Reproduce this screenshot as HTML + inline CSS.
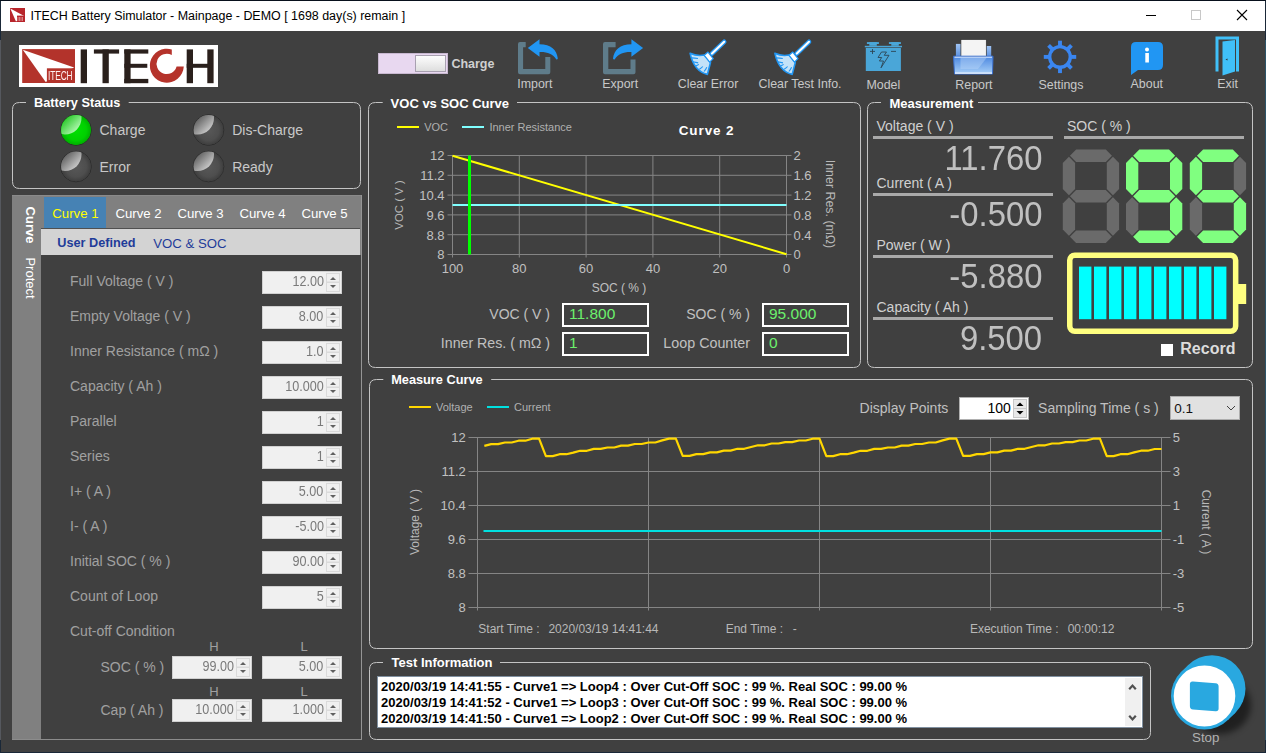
<!DOCTYPE html>
<html><head><meta charset="utf-8"><title>ITECH Battery Simulator</title>
<style>
html,body{margin:0;padding:0;width:1266px;height:753px;overflow:hidden;background:#1d2b3a;}
body{position:relative;font-family:"Liberation Sans", sans-serif;}
.t{position:absolute;white-space:nowrap;font-family:"Liberation Sans", sans-serif;}
svg{position:absolute;left:0;top:0;}
</style></head><body>
<div style="position:absolute;left:0px;top:0px;width:1266px;height:753px;background:#1a2838;"></div><div style="position:absolute;left:0px;top:0px;width:1266px;height:1px;background:#08101c;"></div><div style="position:absolute;left:0px;top:40px;width:1px;height:700px;background:#55585e;"></div><div style="position:absolute;left:1265px;top:40px;width:1px;height:700px;background:#2c5468;"></div><div style="position:absolute;left:1px;top:1px;width:1264px;height:751px;background:#404040;"></div><div style="position:absolute;left:1px;top:1px;width:1264px;height:30px;background:#ffffff;"></div><div style="position:absolute;left:19px;top:45px;width:199px;height:42px;background:#ffffff;"></div><div style="position:absolute;left:378px;top:53px;width:70px;height:21px;background:#e8d8f0;box-shadow: inset 0 0 0 1px #c8b8d0;"></div><div style="position:absolute;left:415px;top:55px;width:31px;height:17px;background:linear-gradient(#ffffff,#dcdcdc);box-shadow: inset 0 0 0 1px #a8a0b0;"></div><div style="position:absolute;left:12px;top:195px;width:349px;height:544px;background:#808080;"></div><div style="position:absolute;left:12px;top:195px;width:349px;height:1px;background:#8a8a8a;"></div><div style="position:absolute;left:44px;top:197px;width:62px;height:31px;background:#4682b4;"></div><div style="position:absolute;left:41px;top:228px;width:319px;height:27px;background:#d3d3d3;border-top:1px solid #505050;box-sizing:border-box;"></div><div style="position:absolute;left:41px;top:255px;width:320px;height:484px;background:#404040;"></div><div style="position:absolute;left:262px;top:271px;width:80px;height:23px;background:#f0f0f0;box-shadow: inset 0 0 0 1px #d0d0d0;"></div><div style="position:absolute;left:262px;top:306px;width:80px;height:23px;background:#f0f0f0;box-shadow: inset 0 0 0 1px #d0d0d0;"></div><div style="position:absolute;left:262px;top:341px;width:80px;height:23px;background:#f0f0f0;box-shadow: inset 0 0 0 1px #d0d0d0;"></div><div style="position:absolute;left:262px;top:376px;width:80px;height:23px;background:#f0f0f0;box-shadow: inset 0 0 0 1px #d0d0d0;"></div><div style="position:absolute;left:262px;top:411px;width:80px;height:23px;background:#f0f0f0;box-shadow: inset 0 0 0 1px #d0d0d0;"></div><div style="position:absolute;left:262px;top:446px;width:80px;height:23px;background:#f0f0f0;box-shadow: inset 0 0 0 1px #d0d0d0;"></div><div style="position:absolute;left:262px;top:481px;width:80px;height:23px;background:#f0f0f0;box-shadow: inset 0 0 0 1px #d0d0d0;"></div><div style="position:absolute;left:262px;top:516px;width:80px;height:23px;background:#f0f0f0;box-shadow: inset 0 0 0 1px #d0d0d0;"></div><div style="position:absolute;left:262px;top:551px;width:80px;height:23px;background:#f0f0f0;box-shadow: inset 0 0 0 1px #d0d0d0;"></div><div style="position:absolute;left:262px;top:586px;width:80px;height:23px;background:#f0f0f0;box-shadow: inset 0 0 0 1px #d0d0d0;"></div><div style="position:absolute;left:172px;top:656px;width:80px;height:23px;background:#f0f0f0;box-shadow: inset 0 0 0 1px #d0d0d0;"></div><div style="position:absolute;left:262px;top:656px;width:80px;height:23px;background:#f0f0f0;box-shadow: inset 0 0 0 1px #d0d0d0;"></div><div style="position:absolute;left:172px;top:699px;width:80px;height:23px;background:#f0f0f0;box-shadow: inset 0 0 0 1px #d0d0d0;"></div><div style="position:absolute;left:262px;top:699px;width:80px;height:23px;background:#f0f0f0;box-shadow: inset 0 0 0 1px #d0d0d0;"></div><div style="position:absolute;left:873px;top:136px;width:180px;height:3px;background:#a9a9a9;"></div><div style="position:absolute;left:873px;top:193px;width:180px;height:3px;background:#a9a9a9;"></div><div style="position:absolute;left:873px;top:255px;width:180px;height:3px;background:#a9a9a9;"></div><div style="position:absolute;left:873px;top:317px;width:180px;height:3px;background:#a9a9a9;"></div><div style="position:absolute;left:1064px;top:136px;width:180px;height:3px;background:#a9a9a9;"></div><div style="position:absolute;left:1161px;top:344px;width:11.5px;height:11.5px;background:#ffffff;"></div><div style="position:absolute;left:959px;top:397px;width:70px;height:23px;background:#ffffff;box-shadow: inset 0 0 0 1px #b0b0b0;"></div><div style="position:absolute;left:1170px;top:396px;width:70px;height:24px;background:#e1e1e1;box-shadow: inset 0 0 0 1px #adadad;"></div><div style="position:absolute;left:377px;top:676px;width:766px;height:52px;background:#ffffff;box-shadow: inset 0 0 0 1px #8090a0;"></div><div style="position:absolute;left:1125px;top:678px;width:16px;height:48px;background:#f0f0f0;"></div>
<svg width="1266" height="753" viewBox="0 0 1266 753"><defs>
<radialGradient id="ledg" cx="0.5" cy="0.5" r="0.5"><stop offset="0" stop-color="#00e000"/><stop offset="0.7" stop-color="#00d000"/><stop offset="1" stop-color="#00b000"/></radialGradient>
<radialGradient id="ledd" cx="0.5" cy="0.5" r="0.5"><stop offset="0" stop-color="#585858"/><stop offset="0.7" stop-color="#4e4e4e"/><stop offset="1" stop-color="#3e3e3e"/></radialGradient>
<linearGradient id="hlg" x1="0.2" y1="0.2" x2="0.85" y2="0.85"><stop offset="0" stop-color="#30c830"/><stop offset="1" stop-color="#b8f8b8"/></linearGradient>
<linearGradient id="hld" x1="0.2" y1="0.2" x2="0.85" y2="0.85"><stop offset="0" stop-color="#5a5a5a"/><stop offset="1" stop-color="#d0d0d0"/></linearGradient>
<linearGradient id="rep" x1="0" y1="0" x2="0" y2="1"><stop offset="0" stop-color="#4a86e0"/><stop offset="1" stop-color="#a8d0f8"/></linearGradient>
<linearGradient id="rep2" x1="0" y1="0" x2="0" y2="1"><stop offset="0" stop-color="#a0c4f4"/><stop offset="1" stop-color="#5a90e0"/></linearGradient>
<radialGradient id="shad" cx="0.5" cy="0.5" r="0.5"><stop offset="0.6" stop-color="#202020" stop-opacity="0.8"/><stop offset="1" stop-color="#202020" stop-opacity="0"/></radialGradient>
<filter id="blur" x="-50%" y="-50%" width="200%" height="200%"><feGaussianBlur stdDeviation="3"/></filter>
</defs><rect x="10" y="8" width="15" height="14" fill="#b8252b"/><path d="M10.3,8.5 L24.2,16 L16,21.6 Z" fill="#ffffff"/><rect x="17" y="15.6" width="7.6" height="6" fill="#b8252b"/><path d="M18,17 L18,21 M19.5,17 L19.5,21 M21,17 L21,21 M22.5,17 L22.5,21" stroke="#f0c0c0" stroke-width="0.6"/><line x1="1146" y1="15.5" x2="1156" y2="15.5" stroke="#000" stroke-width="1"/><rect x="1191.5" y="10.5" width="9" height="9" fill="none" stroke="#c8c8c8" stroke-width="1"/><path d="M1237,10 L1247,20 M1247,10 L1237,20" stroke="#000" stroke-width="1.1"/><rect x="22.2" y="49.1" width="52.8" height="33.9" fill="#b3332b"/><path d="M22.8,49.7 L74.1,67.4 L45.7,82.1 Z" fill="#ffffff"/><rect x="46.9" y="68.3" width="27.8" height="14.1" fill="#b3332b"/><rect x="80.7" y="49.4" width="6.3" height="33.8" fill="#2a201c"/><rect x="93.9" y="49.4" width="25.2" height="4.2" fill="#2a201c"/><rect x="102.5" y="49.4" width="6.3" height="33.8" fill="#2a201c"/><rect x="124.3" y="49.4" width="6.3" height="33.8" fill="#2a201c"/><rect x="124.3" y="49.4" width="24" height="4.2" fill="#2a201c"/><rect x="124.3" y="63.8" width="23" height="4" fill="#2a201c"/><rect x="124.3" y="78.9" width="24" height="4.3" fill="#2a201c"/><path d="M171.8,49.4 A17,17 0 1 0 183.8,66.6 L176.6,66.6 A10.2,10.2 0 1 1 171.8,55 Z" fill="#b5332b"/><rect x="186.7" y="49.4" width="6.3" height="33.8" fill="#2a201c"/><rect x="207.3" y="49.4" width="6.3" height="33.8" fill="#2a201c"/><rect x="186.7" y="63.8" width="26" height="4" fill="#2a201c"/><path d="M518,44 Q518,42 520,42 L525.7,42 L525.7,47.2 L523.1,47.2 L523.1,69.1 L545.3,69.1 L545.3,57.1 L550.3,57.1 L550.3,72.3 Q550.3,74.3 548.3,74.3 L520,74.3 Q518,74.3 518,72.3 Z" fill="#5f7c8a"/><path d="M557.8,58.5 C557,50 551,44.3 539.5,44.2 L539.5,39.3 L527.8,48 L539.5,56.8 L539.5,52.1 C547,51.8 553,54 556.2,59.3 Q557.3,60 557.8,58.5 Z" fill="#2196f3"/><path d="M603,44 Q603,42 605,42 L615.6,42 L615.6,47.2 L608.3,47.2 L608.3,69.1 L630.5,69.1 L630.5,59.4 L635.5,59.4 L635.5,72.3 Q635.5,74.3 633.5,74.3 L605,74.3 Q603,74.3 603,72.3 Z" fill="#5f7c8a"/><path d="M613,58.5 C614,50 620,44.3 631.4,44.2 L631.4,39.3 L643.1,48 L631.4,56.8 L631.4,52.1 C624,51.8 618,54 614.8,59.3 Q613.5,60 613,58.5 Z" fill="#2196f3"/><g transform="translate(684,34)"><path d="M40.2,7.8 L28,19.5" stroke="#2196f3" stroke-width="4.6" stroke-linecap="round"/><path d="M40.2,7.8 L28,19.5" stroke="#ffffff" stroke-width="2.2" stroke-linecap="round"/><path d="M6.1,19.3 Q13,22.5 20.5,21 L26.5,28.5 L23.4,40.4 Q10,37 6.1,19.3 Z" fill="#c4e2f8" stroke="#2196f3" stroke-width="1.6" stroke-linejoin="round"/><path d="M20.2,21.3 L24,18.1 L29.2,24.6 L25.7,28.1 Z" fill="#ffffff" stroke="#2196f3" stroke-width="1.3" stroke-linejoin="round"/><path d="M7.8,23.9 Q11,24 14,24.5 M9,27.8 Q12,28.5 14.2,28.9 M11.7,31.8 Q13.5,31.5 14.8,30.4 M15.4,35.2 Q17.5,34 18.8,32.5 M20,37.5 Q21.8,35.5 22.8,33.2" fill="none" stroke="#2196f3" stroke-width="1.1"/></g><g transform="translate(768.8,34)"><path d="M40.2,7.8 L28,19.5" stroke="#2196f3" stroke-width="4.6" stroke-linecap="round"/><path d="M40.2,7.8 L28,19.5" stroke="#ffffff" stroke-width="2.2" stroke-linecap="round"/><path d="M6.1,19.3 Q13,22.5 20.5,21 L26.5,28.5 L23.4,40.4 Q10,37 6.1,19.3 Z" fill="#c4e2f8" stroke="#2196f3" stroke-width="1.6" stroke-linejoin="round"/><path d="M20.2,21.3 L24,18.1 L29.2,24.6 L25.7,28.1 Z" fill="#ffffff" stroke="#2196f3" stroke-width="1.3" stroke-linejoin="round"/><path d="M7.8,23.9 Q11,24 14,24.5 M9,27.8 Q12,28.5 14.2,28.9 M11.7,31.8 Q13.5,31.5 14.8,30.4 M15.4,35.2 Q17.5,34 18.8,32.5 M20,37.5 Q21.8,35.5 22.8,33.2" fill="none" stroke="#2196f3" stroke-width="1.1"/></g><g transform="translate(860,36)"><rect x="5.8" y="11.9" width="35.1" height="23.1" fill="#4aa6d8"/><rect x="4.8" y="9.8" width="37.2" height="1.5" fill="#4aa6d8"/><rect x="6.9" y="6.1" width="12" height="1.9" fill="#4aa6d8"/><rect x="9.3" y="6.1" width="7.5" height="3.7" fill="#4aa6d8"/><rect x="28.9" y="6.1" width="12" height="1.9" fill="#4aa6d8"/><rect x="31.3" y="6.1" width="7.5" height="3.7" fill="#4aa6d8"/><path d="M10,15.4 L15,15.4 M12.5,13 L12.5,18 M31,15.4 L36,15.4" stroke="#2d4656" stroke-width="0.9"/><path d="M21.5,16 L26.5,16 L24.2,19.3 L29,19.3 L21,31.8 L23.5,25 L19.4,25 L21.7,21.5 L18,21.5 Z" fill="none" stroke="#2d4656" stroke-width="0.9" stroke-linejoin="round"/></g><g transform="translate(948,34)"><rect x="7.9" y="9.9" width="5.5" height="13" fill="url(#rep2)"/><rect x="37.8" y="12" width="5.4" height="11" fill="url(#rep2)"/><rect x="12.9" y="5.5" width="25.4" height="17" fill="#f4f4f4" stroke="#303030" stroke-width="0.7"/><path d="M5.5,22.2 L45,22.2 L44.5,40 L6.5,40 Z" fill="url(#rep)" stroke="#3a70d0" stroke-width="1"/><path d="M6.5,23.2 L44,23.2" stroke="#e0ecff" stroke-width="1"/><path d="M12.5,24 L38.5,24 L30,35 L12.5,35 Z" fill="#b8d4f8" opacity="0.45"/><path d="M7,39.2 L44,39.2" stroke="#f0f6ff" stroke-width="1.2"/></g><g transform="translate(1060,56.9)"><rect x="-1.95" y="-16.2" width="3.9" height="6" fill="#3a86f0" transform="rotate(0)"/><rect x="-1.95" y="-16.2" width="3.9" height="6" fill="#3a86f0" transform="rotate(45)"/><rect x="-1.95" y="-16.2" width="3.9" height="6" fill="#3a86f0" transform="rotate(90)"/><rect x="-1.95" y="-16.2" width="3.9" height="6" fill="#3a86f0" transform="rotate(135)"/><rect x="-1.95" y="-16.2" width="3.9" height="6" fill="#3a86f0" transform="rotate(180)"/><rect x="-1.95" y="-16.2" width="3.9" height="6" fill="#3a86f0" transform="rotate(225)"/><rect x="-1.95" y="-16.2" width="3.9" height="6" fill="#3a86f0" transform="rotate(270)"/><rect x="-1.95" y="-16.2" width="3.9" height="6" fill="#3a86f0" transform="rotate(315)"/><circle cx="0" cy="0" r="10.3" fill="none" stroke="#3a86f0" stroke-width="3.4"/></g><g transform="translate(1131,42)"><path d="M5,0 L27,0 Q32,0 32,5 L32,23 Q32,28 27,28 L7,28 L0,33 L0,5 Q0,0 5,0 Z" fill="#2196f3"/><circle cx="16" cy="7.5" r="2" fill="#fff"/><rect x="14.3" y="11" width="3.6" height="9.5" fill="#fff"/></g><g transform="translate(1215.5,36.5)"><path d="M0,0 L23.5,0 L23.5,35 L20.5,35 L20.5,3 L3,3 L3,35 L0,35 Z" fill="#40c0f8"/><path d="M7,5 L19.5,3.5 L19.5,35 L7,39 Z" fill="#40c0f8"/><path d="M10,23 L12,22 L12,24 Z" fill="#333"/></g><path d="M26,102.5 L19.5,102.5 Q12.5,102.5 12.5,109.5 L12.5,181.5 Q12.5,188.5 19.5,188.5 L353.5,188.5 Q360.5,188.5 360.5,181.5 L360.5,109.5 Q360.5,102.5 353.5,102.5 L128.7,102.5" fill="none" stroke="#c4c4c4" stroke-width="1"/><clipPath id="lc76_130"><circle cx="76" cy="130" r="14.9"/></clipPath><linearGradient id="hg76_130" gradientUnits="userSpaceOnUse" x1="65" y1="118" x2="76.5" y2="129.5"><stop offset="0" stop-color="#28c828"/><stop offset="1" stop-color="#a8f4a8"/></linearGradient><circle cx="76" cy="130" r="15.3" fill="#00c800" stroke="#2a2a2a" stroke-width="1"/><circle cx="76" cy="130" r="14.9" fill="url(#ledg)"/><circle cx="65" cy="118" r="16.5" fill="url(#hg76_130)" clip-path="url(#lc76_130)"/><clipPath id="lc76_166.5"><circle cx="76" cy="166.5" r="14.9"/></clipPath><linearGradient id="hg76_166.5" gradientUnits="userSpaceOnUse" x1="65" y1="154.5" x2="76.5" y2="166.0"><stop offset="0" stop-color="#606060"/><stop offset="1" stop-color="#c4c4c4"/></linearGradient><circle cx="76" cy="166.5" r="15.3" fill="#4c4c4c" stroke="#2a2a2a" stroke-width="1"/><circle cx="76" cy="166.5" r="14.9" fill="url(#ledd)"/><circle cx="65" cy="154.5" r="16.5" fill="url(#hg76_166.5)" clip-path="url(#lc76_166.5)"/><clipPath id="lc208.5_130"><circle cx="208.5" cy="130" r="14.9"/></clipPath><linearGradient id="hg208.5_130" gradientUnits="userSpaceOnUse" x1="197.5" y1="118" x2="209.0" y2="129.5"><stop offset="0" stop-color="#606060"/><stop offset="1" stop-color="#c4c4c4"/></linearGradient><circle cx="208.5" cy="130" r="15.3" fill="#4c4c4c" stroke="#2a2a2a" stroke-width="1"/><circle cx="208.5" cy="130" r="14.9" fill="url(#ledd)"/><circle cx="197.5" cy="118" r="16.5" fill="url(#hg208.5_130)" clip-path="url(#lc208.5_130)"/><clipPath id="lc208.5_166.5"><circle cx="208.5" cy="166.5" r="14.9"/></clipPath><linearGradient id="hg208.5_166.5" gradientUnits="userSpaceOnUse" x1="197.5" y1="154.5" x2="209.0" y2="166.0"><stop offset="0" stop-color="#606060"/><stop offset="1" stop-color="#c4c4c4"/></linearGradient><circle cx="208.5" cy="166.5" r="15.3" fill="#4c4c4c" stroke="#2a2a2a" stroke-width="1"/><circle cx="208.5" cy="166.5" r="14.9" fill="url(#ledd)"/><circle cx="197.5" cy="154.5" r="16.5" fill="url(#hg208.5_166.5)" clip-path="url(#lc208.5_166.5)"/><line x1="361.5" y1="195" x2="361.5" y2="740" stroke="#959595" stroke-width="1"/><line x1="12" y1="739.5" x2="362" y2="739.5" stroke="#8c8c8c" stroke-width="1"/><rect x="326.5" y="273.5" width="13" height="8.5" fill="#f0f0f0" stroke="#dadada" stroke-width="1"/><rect x="326.5" y="282.5" width="13" height="9" fill="#f0f0f0" stroke="#dadada" stroke-width="1"/><path d="M330,280 L333,277 L336,280 Z" fill="#606060"/><path d="M330,285 L333,288 L336,285 Z" fill="#606060"/><rect x="326.5" y="308.5" width="13" height="8.5" fill="#f0f0f0" stroke="#dadada" stroke-width="1"/><rect x="326.5" y="317.5" width="13" height="9" fill="#f0f0f0" stroke="#dadada" stroke-width="1"/><path d="M330,315 L333,312 L336,315 Z" fill="#606060"/><path d="M330,320 L333,323 L336,320 Z" fill="#606060"/><rect x="326.5" y="343.5" width="13" height="8.5" fill="#f0f0f0" stroke="#dadada" stroke-width="1"/><rect x="326.5" y="352.5" width="13" height="9" fill="#f0f0f0" stroke="#dadada" stroke-width="1"/><path d="M330,350 L333,347 L336,350 Z" fill="#606060"/><path d="M330,355 L333,358 L336,355 Z" fill="#606060"/><rect x="326.5" y="378.5" width="13" height="8.5" fill="#f0f0f0" stroke="#dadada" stroke-width="1"/><rect x="326.5" y="387.5" width="13" height="9" fill="#f0f0f0" stroke="#dadada" stroke-width="1"/><path d="M330,385 L333,382 L336,385 Z" fill="#606060"/><path d="M330,390 L333,393 L336,390 Z" fill="#606060"/><rect x="326.5" y="413.5" width="13" height="8.5" fill="#f0f0f0" stroke="#dadada" stroke-width="1"/><rect x="326.5" y="422.5" width="13" height="9" fill="#f0f0f0" stroke="#dadada" stroke-width="1"/><path d="M330,420 L333,417 L336,420 Z" fill="#606060"/><path d="M330,425 L333,428 L336,425 Z" fill="#606060"/><rect x="326.5" y="448.5" width="13" height="8.5" fill="#f0f0f0" stroke="#dadada" stroke-width="1"/><rect x="326.5" y="457.5" width="13" height="9" fill="#f0f0f0" stroke="#dadada" stroke-width="1"/><path d="M330,455 L333,452 L336,455 Z" fill="#606060"/><path d="M330,460 L333,463 L336,460 Z" fill="#606060"/><rect x="326.5" y="483.5" width="13" height="8.5" fill="#f0f0f0" stroke="#dadada" stroke-width="1"/><rect x="326.5" y="492.5" width="13" height="9" fill="#f0f0f0" stroke="#dadada" stroke-width="1"/><path d="M330,490 L333,487 L336,490 Z" fill="#606060"/><path d="M330,495 L333,498 L336,495 Z" fill="#606060"/><rect x="326.5" y="518.5" width="13" height="8.5" fill="#f0f0f0" stroke="#dadada" stroke-width="1"/><rect x="326.5" y="527.5" width="13" height="9" fill="#f0f0f0" stroke="#dadada" stroke-width="1"/><path d="M330,525 L333,522 L336,525 Z" fill="#606060"/><path d="M330,530 L333,533 L336,530 Z" fill="#606060"/><rect x="326.5" y="553.5" width="13" height="8.5" fill="#f0f0f0" stroke="#dadada" stroke-width="1"/><rect x="326.5" y="562.5" width="13" height="9" fill="#f0f0f0" stroke="#dadada" stroke-width="1"/><path d="M330,560 L333,557 L336,560 Z" fill="#606060"/><path d="M330,565 L333,568 L336,565 Z" fill="#606060"/><rect x="326.5" y="588.5" width="13" height="8.5" fill="#f0f0f0" stroke="#dadada" stroke-width="1"/><rect x="326.5" y="597.5" width="13" height="9" fill="#f0f0f0" stroke="#dadada" stroke-width="1"/><path d="M330,595 L333,592 L336,595 Z" fill="#606060"/><path d="M330,600 L333,603 L336,600 Z" fill="#606060"/><rect x="236.5" y="658.5" width="13" height="8.5" fill="#f0f0f0" stroke="#dadada" stroke-width="1"/><rect x="236.5" y="667.5" width="13" height="9" fill="#f0f0f0" stroke="#dadada" stroke-width="1"/><path d="M240,665 L243,662 L246,665 Z" fill="#606060"/><path d="M240,670 L243,673 L246,670 Z" fill="#606060"/><rect x="326.5" y="658.5" width="13" height="8.5" fill="#f0f0f0" stroke="#dadada" stroke-width="1"/><rect x="326.5" y="667.5" width="13" height="9" fill="#f0f0f0" stroke="#dadada" stroke-width="1"/><path d="M330,665 L333,662 L336,665 Z" fill="#606060"/><path d="M330,670 L333,673 L336,670 Z" fill="#606060"/><rect x="236.5" y="701.5" width="13" height="8.5" fill="#f0f0f0" stroke="#dadada" stroke-width="1"/><rect x="236.5" y="710.5" width="13" height="9" fill="#f0f0f0" stroke="#dadada" stroke-width="1"/><path d="M240,708 L243,705 L246,708 Z" fill="#606060"/><path d="M240,713 L243,716 L246,713 Z" fill="#606060"/><rect x="326.5" y="701.5" width="13" height="8.5" fill="#f0f0f0" stroke="#dadada" stroke-width="1"/><rect x="326.5" y="710.5" width="13" height="9" fill="#f0f0f0" stroke="#dadada" stroke-width="1"/><path d="M330,708 L333,705 L336,708 Z" fill="#606060"/><path d="M330,713 L333,716 L336,713 Z" fill="#606060"/><path d="M382.7,102.5 L375.5,102.5 Q368.5,102.5 368.5,109.5 L368.5,360.5 Q368.5,367.5 375.5,367.5 L853.5,367.5 Q860.5,367.5 860.5,360.5 L860.5,109.5 Q860.5,102.5 853.5,102.5 L517,102.5" fill="none" stroke="#c4c4c4" stroke-width="1"/><rect x="397" y="126" width="22" height="2" fill="#ffff00"/><rect x="462" y="126" width="22" height="2" fill="#80ffff"/><line x1="452.5" y1="155.5" x2="452.5" y2="257.5" stroke="#858585" stroke-width="1"/><line x1="447.5" y1="155.5" x2="791.5" y2="155.5" stroke="#858585" stroke-width="1"/><line x1="519.3" y1="155.5" x2="519.3" y2="257.5" stroke="#858585" stroke-width="1"/><line x1="447.5" y1="175.3" x2="791.5" y2="175.3" stroke="#858585" stroke-width="1"/><line x1="586.1" y1="155.5" x2="586.1" y2="257.5" stroke="#858585" stroke-width="1"/><line x1="447.5" y1="195.1" x2="791.5" y2="195.1" stroke="#858585" stroke-width="1"/><line x1="652.9" y1="155.5" x2="652.9" y2="257.5" stroke="#858585" stroke-width="1"/><line x1="447.5" y1="214.9" x2="791.5" y2="214.9" stroke="#858585" stroke-width="1"/><line x1="719.7" y1="155.5" x2="719.7" y2="257.5" stroke="#858585" stroke-width="1"/><line x1="447.5" y1="234.7" x2="791.5" y2="234.7" stroke="#858585" stroke-width="1"/><line x1="786.5" y1="155.5" x2="786.5" y2="257.5" stroke="#858585" stroke-width="1"/><line x1="447.5" y1="254.5" x2="791.5" y2="254.5" stroke="#858585" stroke-width="1"/><line x1="452.5" y1="155.7" x2="786.5" y2="254.2" stroke="#ffff00" stroke-width="2"/><line x1="452.5" y1="205" x2="786.5" y2="205" stroke="#80ffff" stroke-width="2.2"/><line x1="469.5" y1="155.5" x2="469.5" y2="254.5" stroke="#00ff00" stroke-width="3"/><rect x="563" y="304" width="85" height="22" fill="none" stroke="#ffffff" stroke-width="2"/><rect x="563" y="333" width="85" height="22" fill="none" stroke="#ffffff" stroke-width="2"/><rect x="763" y="304" width="85" height="22" fill="none" stroke="#ffffff" stroke-width="2"/><rect x="763" y="333" width="85" height="22" fill="none" stroke="#ffffff" stroke-width="2"/><path d="M881,102.5 L874.5,102.5 Q867.5,102.5 867.5,109.5 L867.5,360.5 Q867.5,367.5 874.5,367.5 L1245.5,367.5 Q1252.5,367.5 1252.5,360.5 L1252.5,109.5 Q1252.5,102.5 1245.5,102.5 L978,102.5" fill="none" stroke="#c4c4c4" stroke-width="1"/><polygon points="1069.95,155.75 1076.1000000000001,149.6 1105.7999999999997,149.6 1111.9499999999998,155.75 1105.7999999999997,161.9 1076.1000000000001,161.9" fill="#6a6a6a"/><polygon points="1112.9499999999998,156.75 1119.1,162.9 1119.1,189.1 1112.9499999999998,195.25 1106.7999999999997,189.1 1106.7999999999997,162.9" fill="#6a6a6a"/><polygon points="1112.9499999999998,197.25 1119.1,203.4 1119.1,229.59999999999997 1112.9499999999998,235.74999999999997 1106.7999999999997,229.59999999999997 1106.7999999999997,203.4" fill="#6a6a6a"/><polygon points="1069.95,236.74999999999997 1076.1000000000001,230.59999999999997 1105.7999999999997,230.59999999999997 1111.9499999999998,236.74999999999997 1105.7999999999997,242.89999999999998 1076.1000000000001,242.89999999999998" fill="#6a6a6a"/><polygon points="1068.95,197.25 1075.1000000000001,203.4 1075.1000000000001,229.59999999999997 1068.95,235.74999999999997 1062.8,229.59999999999997 1062.8,203.4" fill="#6a6a6a"/><polygon points="1068.95,156.75 1075.1000000000001,162.9 1075.1000000000001,189.1 1068.95,195.25 1062.8,189.1 1062.8,162.9" fill="#6a6a6a"/><polygon points="1069.95,196.25 1076.1000000000001,190.1 1105.7999999999997,190.1 1111.9499999999998,196.25 1105.7999999999997,202.4 1076.1000000000001,202.4" fill="#6a6a6a"/><polygon points="1133.15,155.75 1139.3000000000002,149.6 1168.9999999999998,149.6 1175.1499999999999,155.75 1168.9999999999998,161.9 1139.3000000000002,161.9" fill="#80ff80"/><polygon points="1176.1499999999999,156.75 1182.3,162.9 1182.3,189.1 1176.1499999999999,195.25 1169.9999999999998,189.1 1169.9999999999998,162.9" fill="#80ff80"/><polygon points="1176.1499999999999,197.25 1182.3,203.4 1182.3,229.59999999999997 1176.1499999999999,235.74999999999997 1169.9999999999998,229.59999999999997 1169.9999999999998,203.4" fill="#80ff80"/><polygon points="1133.15,236.74999999999997 1139.3000000000002,230.59999999999997 1168.9999999999998,230.59999999999997 1175.1499999999999,236.74999999999997 1168.9999999999998,242.89999999999998 1139.3000000000002,242.89999999999998" fill="#80ff80"/><polygon points="1132.15,197.25 1138.3000000000002,203.4 1138.3000000000002,229.59999999999997 1132.15,235.74999999999997 1126.0,229.59999999999997 1126.0,203.4" fill="#6a6a6a"/><polygon points="1132.15,156.75 1138.3000000000002,162.9 1138.3000000000002,189.1 1132.15,195.25 1126.0,189.1 1126.0,162.9" fill="#80ff80"/><polygon points="1133.15,196.25 1139.3000000000002,190.1 1168.9999999999998,190.1 1175.1499999999999,196.25 1168.9999999999998,202.4 1139.3000000000002,202.4" fill="#80ff80"/><polygon points="1196.95,155.75 1203.1000000000001,149.6 1232.7999999999997,149.6 1238.9499999999998,155.75 1232.7999999999997,161.9 1203.1000000000001,161.9" fill="#80ff80"/><polygon points="1239.9499999999998,156.75 1246.1,162.9 1246.1,189.1 1239.9499999999998,195.25 1233.7999999999997,189.1 1233.7999999999997,162.9" fill="#6a6a6a"/><polygon points="1239.9499999999998,197.25 1246.1,203.4 1246.1,229.59999999999997 1239.9499999999998,235.74999999999997 1233.7999999999997,229.59999999999997 1233.7999999999997,203.4" fill="#80ff80"/><polygon points="1196.95,236.74999999999997 1203.1000000000001,230.59999999999997 1232.7999999999997,230.59999999999997 1238.9499999999998,236.74999999999997 1232.7999999999997,242.89999999999998 1203.1000000000001,242.89999999999998" fill="#80ff80"/><polygon points="1195.95,197.25 1202.1000000000001,203.4 1202.1000000000001,229.59999999999997 1195.95,235.74999999999997 1189.8,229.59999999999997 1189.8,203.4" fill="#6a6a6a"/><polygon points="1195.95,156.75 1202.1000000000001,162.9 1202.1000000000001,189.1 1195.95,195.25 1189.8,189.1 1189.8,162.9" fill="#80ff80"/><polygon points="1196.95,196.25 1203.1000000000001,190.1 1232.7999999999997,190.1 1238.9499999999998,196.25 1232.7999999999997,202.4 1203.1000000000001,202.4" fill="#80ff80"/><rect x="1069.75" y="255.25" width="165.9" height="76.1" rx="5" fill="none" stroke="#ffff80" stroke-width="5.5"/><rect x="1238" y="284" width="8.2" height="20" fill="#ffff80"/><rect x="1079" y="266.6" width="12.4" height="52.6" fill="#00ffff"/><rect x="1094" y="266.6" width="12.4" height="52.6" fill="#00ffff"/><rect x="1109" y="266.6" width="12.4" height="52.6" fill="#00ffff"/><rect x="1124" y="266.6" width="12.4" height="52.6" fill="#00ffff"/><rect x="1139" y="266.6" width="12.4" height="52.6" fill="#00ffff"/><rect x="1154" y="266.6" width="12.4" height="52.6" fill="#00ffff"/><rect x="1169" y="266.6" width="12.4" height="52.6" fill="#00ffff"/><rect x="1184" y="266.6" width="12.4" height="52.6" fill="#00ffff"/><rect x="1199" y="266.6" width="12.4" height="52.6" fill="#00ffff"/><rect x="1214" y="266.6" width="12.4" height="52.6" fill="#00ffff"/><path d="M383.3,379.5 L376.5,379.5 Q369.5,379.5 369.5,386.5 L369.5,641.5 Q369.5,648.5 376.5,648.5 L1245.5,648.5 Q1252.5,648.5 1252.5,641.5 L1252.5,386.5 Q1252.5,379.5 1245.5,379.5 L491.2,379.5" fill="none" stroke="#c4c4c4" stroke-width="1"/><rect x="409" y="406" width="22" height="2" fill="#ffd700"/><rect x="487" y="406" width="22" height="2" fill="#00e0e0"/><rect x="1013.5" y="399.5" width="13" height="9" fill="#e8e8e8" stroke="#c8c8c8" stroke-width="1"/><rect x="1013.5" y="408.5" width="13" height="9" fill="#e8e8e8" stroke="#c8c8c8" stroke-width="1"/><path d="M1016.5,406 L1020,402.5 L1023.5,406 Z" fill="#000"/><path d="M1016.5,411 L1020,414.5 L1023.5,411 Z" fill="#000"/><path d="M1227,406 L1231,410 L1235,406" fill="none" stroke="#404040" stroke-width="1"/><line x1="477.5" y1="437.5" x2="477.5" y2="610.5" stroke="#858585" stroke-width="1"/><line x1="648.5" y1="437.5" x2="648.5" y2="610.5" stroke="#858585" stroke-width="1"/><line x1="819.5" y1="437.5" x2="819.5" y2="610.5" stroke="#858585" stroke-width="1"/><line x1="990.5" y1="437.5" x2="990.5" y2="610.5" stroke="#858585" stroke-width="1"/><line x1="1161.5" y1="437.5" x2="1161.5" y2="610.5" stroke="#858585" stroke-width="1"/><line x1="468.5" y1="437.5" x2="1170.5" y2="437.5" stroke="#858585" stroke-width="1"/><line x1="468.5" y1="471.5" x2="1170.5" y2="471.5" stroke="#858585" stroke-width="1"/><line x1="468.5" y1="505.5" x2="1170.5" y2="505.5" stroke="#858585" stroke-width="1"/><line x1="468.5" y1="539.5" x2="1170.5" y2="539.5" stroke="#858585" stroke-width="1"/><line x1="468.5" y1="573.5" x2="1170.5" y2="573.5" stroke="#858585" stroke-width="1"/><line x1="468.5" y1="607.5" x2="1170.5" y2="607.5" stroke="#858585" stroke-width="1"/><polyline points="484.34,445.90 491.18,444.10 498.02,444.10 504.86,442.50 511.70,442.50 518.54,440.70 525.38,440.70 532.22,438.70 539.06,438.70 545.90,456.10 552.74,456.10 559.58,454.20 566.42,454.20 573.26,452.60 580.10,450.80 586.94,450.80 593.78,448.90 600.62,448.90 607.46,447.50 614.30,447.50 621.14,445.60 627.98,445.60 634.82,444.00 641.66,444.00 648.50,442.50 655.34,442.50 662.18,440.40 669.02,438.60 675.86,438.60 682.70,455.90 689.54,455.90 696.38,454.10 703.22,454.10 710.06,452.40 716.90,452.40 723.74,450.60 730.58,450.60 737.42,448.80 744.26,448.80 751.10,447.00 757.94,445.30 764.78,445.30 771.62,443.50 778.46,443.50 785.30,442.10 792.14,442.10 798.98,440.50 805.82,440.50 812.66,438.70 819.50,438.70 826.34,456.10 833.18,456.10 840.02,454.20 846.86,454.20 853.70,452.60 860.54,450.80 867.38,450.80 874.22,448.90 881.06,448.90 887.90,447.50 894.74,447.50 901.58,445.60 908.42,445.60 915.26,444.00 922.10,444.00 928.94,442.50 935.78,442.50 942.62,440.40 949.46,438.60 956.30,438.60 963.14,455.90 969.98,455.90 976.82,454.10 983.66,454.10 990.50,452.40 997.34,452.40 1004.18,450.60 1011.02,450.60 1017.86,448.80 1024.70,448.80 1031.54,447.00 1038.38,445.30 1045.22,445.30 1052.06,443.50 1058.90,443.50 1065.74,442.10 1072.58,442.10 1079.42,440.50 1086.26,440.50 1093.10,438.70 1099.94,438.70 1106.78,456.10 1113.62,456.10 1120.46,454.20 1127.30,454.20 1134.14,452.40 1140.98,450.70 1147.82,450.70 1154.66,449.00 1161.50,449.00" fill="none" stroke="#ffd700" stroke-width="2.2" stroke-linejoin="round"/><line x1="483.5" y1="531" x2="1161.5" y2="531" stroke="#00e0e0" stroke-width="2.2"/><path d="M383,662.5 L376.5,662.5 Q369.5,662.5 369.5,669.5 L369.5,732.5 Q369.5,739.5 376.5,739.5 L1143.5,739.5 Q1150.5,739.5 1150.5,732.5 L1150.5,669.5 Q1150.5,662.5 1143.5,662.5 L500,662.5" fill="none" stroke="#c4c4c4" stroke-width="1"/><path d="M1129.2,689.2 L1132.5,685.6 L1135.8,689.2" fill="none" stroke="#505050" stroke-width="2.2"/><path d="M1129.2,715.8 L1132.5,719.4 L1135.8,715.8" fill="none" stroke="#505050" stroke-width="2.2"/><ellipse cx="1220" cy="705" rx="31" ry="29" fill="#000" opacity="0.5" filter="url(#blur)"/><circle cx="1204.5" cy="696" r="33.5" fill="#29a8e0"/><circle cx="1212" cy="688.7" r="33.5" fill="#29a8e0"/><path d="M1181.1,672 L1188.6,664.7 L1235.4,712.7 L1227.9,720 Z" fill="#29a8e0"/><ellipse cx="1204.5" cy="696" rx="30.8" ry="30.5" fill="#ffffff"/><rect x="0" y="0" width="28.7" height="28" rx="3" fill="#29a8e0" transform="translate(1189.9,681.3) skewY(4.5)"/></svg>
<div class="t" style="left:30.5px;top:9.78px;font-size:12.45px;line-height:12.45px;color:#000000;font-weight:400;">ITECH Battery Simulator - Mainpage - DEMO [ 1698 day(s) remain ]</div><div class="t" style="left:48.3px;top:69.2px;font-size:13.5px;line-height:13px;color:#fff0f0;font-weight:400;transform:scaleX(0.62);transform-origin:0 0;letter-spacing:-0.2px">ITECH</div><div class="t" style="left:451.4px;top:57.95px;font-size:12.5px;line-height:12.5px;color:#d0d0d0;font-weight:700;">Charge</div><div class="t" style="left:534.8px;transform:translateX(-50%);top:78.00px;font-size:12.4px;line-height:12.4px;color:#c8c8c8;font-weight:400;">Import</div><div class="t" style="left:620.2px;transform:translateX(-50%);top:78.00px;font-size:12.4px;line-height:12.4px;color:#c8c8c8;font-weight:400;">Export</div><div class="t" style="left:708px;transform:translateX(-50%);top:78.00px;font-size:12.4px;line-height:12.4px;color:#c8c8c8;font-weight:400;">Clear Error</div><div class="t" style="left:800px;transform:translateX(-50%);top:78.00px;font-size:12.4px;line-height:12.4px;color:#c8c8c8;font-weight:400;">Clear Test Info.</div><div class="t" style="left:883.4px;transform:translateX(-50%);top:78.50px;font-size:12.4px;line-height:12.4px;color:#c8c8c8;font-weight:400;">Model</div><div class="t" style="left:973.9px;transform:translateX(-50%);top:79.20px;font-size:12.4px;line-height:12.4px;color:#c8c8c8;font-weight:400;">Report</div><div class="t" style="left:1061px;transform:translateX(-50%);top:78.50px;font-size:12.4px;line-height:12.4px;color:#c8c8c8;font-weight:400;">Settings</div><div class="t" style="left:1146.8px;transform:translateX(-50%);top:78.20px;font-size:12.4px;line-height:12.4px;color:#c8c8c8;font-weight:400;">About</div><div class="t" style="left:1227.7px;transform:translateX(-50%);top:78.20px;font-size:12.4px;line-height:12.4px;color:#c8c8c8;font-weight:400;">Exit</div><div class="t" style="left:34px;top:97.42px;font-size:12.75px;line-height:12.75px;color:#ffffff;font-weight:700;">Battery Status</div><div class="t" style="left:99.5px;top:123.00px;font-size:14px;line-height:14.0px;color:#c8c8c8;font-weight:400;">Charge</div><div class="t" style="left:99.5px;top:159.50px;font-size:14px;line-height:14.0px;color:#c8c8c8;font-weight:400;">Error</div><div class="t" style="left:232.2px;top:123.00px;font-size:14px;line-height:14.0px;color:#c8c8c8;font-weight:400;">Dis-Charge</div><div class="t" style="left:232.2px;top:159.50px;font-size:14px;line-height:14.0px;color:#c8c8c8;font-weight:400;">Ready</div><div class="t" style="left:52.3px;top:206.80px;font-size:13.2px;line-height:13.2px;color:#ffff00;font-weight:400;">Curve 1</div><div class="t" style="left:115.4px;top:206.80px;font-size:13.2px;line-height:13.2px;color:#ffffff;font-weight:400;">Curve 2</div><div class="t" style="left:177.4px;top:206.80px;font-size:13.2px;line-height:13.2px;color:#ffffff;font-weight:400;">Curve 3</div><div class="t" style="left:239.4px;top:206.80px;font-size:13.2px;line-height:13.2px;color:#ffffff;font-weight:400;">Curve 4</div><div class="t" style="left:301.5px;top:206.80px;font-size:13.2px;line-height:13.2px;color:#ffffff;font-weight:400;">Curve 5</div><div class="t" style="left:57.3px;top:237.45px;font-size:12.7px;line-height:12.7px;color:#1f3c99;font-weight:700;">User Defined</div><div class="t" style="left:153.3px;top:236.70px;font-size:13.2px;line-height:13.2px;color:#1f3c99;font-weight:400;">VOC &amp; SOC</div><div class="t" style="left:30px;top:225px;font-size:13px;line-height:13px;color:#fff;font-weight:700;transform:translate(-50%,-50%) rotate(90deg);">Curve</div><div class="t" style="left:30px;top:278.3px;font-size:13px;line-height:13px;color:#fff;font-weight:400;transform:translate(-50%,-50%) rotate(90deg);">Protect</div><div class="t" style="left:70px;top:273.50px;font-size:14px;line-height:14.0px;color:#a0a0a0;font-weight:400;">Full Voltage ( V )</div><div class="t" style="right:942.4px;top:274.00px;font-size:14px;line-height:14.0px;color:#7a7a7a;font-weight:400;transform:scaleX(0.9);transform-origin:100% 50%;">12.00</div><div class="t" style="left:70px;top:308.50px;font-size:14px;line-height:14.0px;color:#a0a0a0;font-weight:400;">Empty Voltage ( V )</div><div class="t" style="right:942.4px;top:309.00px;font-size:14px;line-height:14.0px;color:#7a7a7a;font-weight:400;transform:scaleX(0.9);transform-origin:100% 50%;">8.00</div><div class="t" style="left:70px;top:343.50px;font-size:14px;line-height:14.0px;color:#a0a0a0;font-weight:400;">Inner Resistance ( mΩ )</div><div class="t" style="right:942.4px;top:344.00px;font-size:14px;line-height:14.0px;color:#7a7a7a;font-weight:400;transform:scaleX(0.9);transform-origin:100% 50%;">1.0</div><div class="t" style="left:70px;top:378.50px;font-size:14px;line-height:14.0px;color:#a0a0a0;font-weight:400;">Capacity ( Ah )</div><div class="t" style="right:942.4px;top:379.00px;font-size:14px;line-height:14.0px;color:#7a7a7a;font-weight:400;transform:scaleX(0.9);transform-origin:100% 50%;">10.000</div><div class="t" style="left:70px;top:413.50px;font-size:14px;line-height:14.0px;color:#a0a0a0;font-weight:400;">Parallel</div><div class="t" style="right:942.4px;top:414.00px;font-size:14px;line-height:14.0px;color:#7a7a7a;font-weight:400;transform:scaleX(0.9);transform-origin:100% 50%;">1</div><div class="t" style="left:70px;top:448.50px;font-size:14px;line-height:14.0px;color:#a0a0a0;font-weight:400;">Series</div><div class="t" style="right:942.4px;top:449.00px;font-size:14px;line-height:14.0px;color:#7a7a7a;font-weight:400;transform:scaleX(0.9);transform-origin:100% 50%;">1</div><div class="t" style="left:70px;top:483.50px;font-size:14px;line-height:14.0px;color:#a0a0a0;font-weight:400;">I+ ( A )</div><div class="t" style="right:942.4px;top:484.00px;font-size:14px;line-height:14.0px;color:#7a7a7a;font-weight:400;transform:scaleX(0.9);transform-origin:100% 50%;">5.00</div><div class="t" style="left:70px;top:518.50px;font-size:14px;line-height:14.0px;color:#a0a0a0;font-weight:400;">I- ( A )</div><div class="t" style="right:942.4px;top:519.00px;font-size:14px;line-height:14.0px;color:#7a7a7a;font-weight:400;transform:scaleX(0.9);transform-origin:100% 50%;">-5.00</div><div class="t" style="left:70px;top:553.50px;font-size:14px;line-height:14.0px;color:#a0a0a0;font-weight:400;">Initial SOC ( % )</div><div class="t" style="right:942.4px;top:554.00px;font-size:14px;line-height:14.0px;color:#7a7a7a;font-weight:400;transform:scaleX(0.9);transform-origin:100% 50%;">90.00</div><div class="t" style="left:70px;top:588.50px;font-size:14px;line-height:14.0px;color:#a0a0a0;font-weight:400;">Count of Loop</div><div class="t" style="right:942.4px;top:589.00px;font-size:14px;line-height:14.0px;color:#7a7a7a;font-weight:400;transform:scaleX(0.9);transform-origin:100% 50%;">5</div><div class="t" style="left:70px;top:623.50px;font-size:14px;line-height:14.0px;color:#a0a0a0;font-weight:400;">Cut-off Condition</div><div class="t" style="left:214px;transform:translateX(-50%);top:640.20px;font-size:13px;line-height:13.0px;color:#a0a0a0;font-weight:400;">H</div><div class="t" style="left:304px;transform:translateX(-50%);top:640.20px;font-size:13px;line-height:13.0px;color:#a0a0a0;font-weight:400;">L</div><div class="t" style="left:100.5px;top:659.50px;font-size:14px;line-height:14.0px;color:#a0a0a0;font-weight:400;">SOC ( % )</div><div class="t" style="right:1032.4px;top:659.00px;font-size:14px;line-height:14.0px;color:#7a7a7a;font-weight:400;transform:scaleX(0.9);transform-origin:100% 50%;">99.00</div><div class="t" style="right:942.4px;top:659.00px;font-size:14px;line-height:14.0px;color:#7a7a7a;font-weight:400;transform:scaleX(0.9);transform-origin:100% 50%;">5.00</div><div class="t" style="left:214px;transform:translateX(-50%);top:685.30px;font-size:13px;line-height:13.0px;color:#a0a0a0;font-weight:400;">H</div><div class="t" style="left:304px;transform:translateX(-50%);top:685.30px;font-size:13px;line-height:13.0px;color:#a0a0a0;font-weight:400;">L</div><div class="t" style="left:100.5px;top:703.30px;font-size:14px;line-height:14.0px;color:#a0a0a0;font-weight:400;">Cap ( Ah )</div><div class="t" style="right:1032.4px;top:702.00px;font-size:14px;line-height:14.0px;color:#7a7a7a;font-weight:400;transform:scaleX(0.9);transform-origin:100% 50%;">10.000</div><div class="t" style="right:942.4px;top:702.00px;font-size:14px;line-height:14.0px;color:#7a7a7a;font-weight:400;transform:scaleX(0.9);transform-origin:100% 50%;">1.000</div><div class="t" style="left:390.6px;top:96.80px;font-size:13px;line-height:13.0px;color:#ffffff;font-weight:700;">VOC vs SOC Curve</div><div class="t" style="left:424.2px;top:122.00px;font-size:11px;line-height:11.0px;color:#b0b0b0;font-weight:400;">VOC</div><div class="t" style="left:489.4px;top:122.00px;font-size:11px;line-height:11.0px;color:#b0b0b0;font-weight:400;">Inner Resistance</div><div class="t" style="left:706.6px;transform:translateX(-50%);top:123.65px;font-size:13.5px;line-height:13.5px;color:#ffffff;font-weight:700;letter-spacing:0.9px;">Curve 2</div><div class="t" style="right:821.5px;top:149.30px;font-size:13px;line-height:13.0px;color:#c0c0c0;font-weight:400;">12</div><div class="t" style="right:821.5px;top:169.10px;font-size:13px;line-height:13.0px;color:#c0c0c0;font-weight:400;">11.2</div><div class="t" style="right:821.5px;top:188.90px;font-size:13px;line-height:13.0px;color:#c0c0c0;font-weight:400;">10.4</div><div class="t" style="right:821.5px;top:208.70px;font-size:13px;line-height:13.0px;color:#c0c0c0;font-weight:400;">9.6</div><div class="t" style="right:821.5px;top:228.50px;font-size:13px;line-height:13.0px;color:#c0c0c0;font-weight:400;">8.8</div><div class="t" style="right:821.5px;top:248.30px;font-size:13px;line-height:13.0px;color:#c0c0c0;font-weight:400;">8</div><div class="t" style="left:793.5px;top:149.30px;font-size:13px;line-height:13.0px;color:#c0c0c0;font-weight:400;">2</div><div class="t" style="left:793.5px;top:169.10px;font-size:13px;line-height:13.0px;color:#c0c0c0;font-weight:400;">1.6</div><div class="t" style="left:793.5px;top:188.90px;font-size:13px;line-height:13.0px;color:#c0c0c0;font-weight:400;">1.2</div><div class="t" style="left:793.5px;top:208.70px;font-size:13px;line-height:13.0px;color:#c0c0c0;font-weight:400;">0.8</div><div class="t" style="left:793.5px;top:228.50px;font-size:13px;line-height:13.0px;color:#c0c0c0;font-weight:400;">0.4</div><div class="t" style="left:793.5px;top:248.30px;font-size:13px;line-height:13.0px;color:#c0c0c0;font-weight:400;">0</div><div class="t" style="left:452.5px;transform:translateX(-50%);top:262.30px;font-size:13px;line-height:13.0px;color:#c0c0c0;font-weight:400;">100</div><div class="t" style="left:519.3px;transform:translateX(-50%);top:262.30px;font-size:13px;line-height:13.0px;color:#c0c0c0;font-weight:400;">80</div><div class="t" style="left:586.1px;transform:translateX(-50%);top:262.30px;font-size:13px;line-height:13.0px;color:#c0c0c0;font-weight:400;">60</div><div class="t" style="left:652.9px;transform:translateX(-50%);top:262.30px;font-size:13px;line-height:13.0px;color:#c0c0c0;font-weight:400;">40</div><div class="t" style="left:719.7px;transform:translateX(-50%);top:262.30px;font-size:13px;line-height:13.0px;color:#c0c0c0;font-weight:400;">20</div><div class="t" style="left:786.5px;transform:translateX(-50%);top:262.30px;font-size:13px;line-height:13.0px;color:#c0c0c0;font-weight:400;">0</div><div class="t" style="left:619px;transform:translateX(-50%);top:281.80px;font-size:12px;line-height:12.0px;color:#c0c0c0;font-weight:400;">SOC ( % )</div><div class="t" style="left:398.8px;top:204.5px;font-size:11.4px;line-height:12px;color:#b8b8b8;transform:translate(-50%,-50%) rotate(-90deg);">VOC ( V )</div><div class="t" style="left:830px;top:204px;font-size:12.4px;line-height:12px;color:#b8b8b8;transform:translate(-50%,-50%) rotate(90deg);">Inner Res. (mΩ)</div><div class="t" style="left:569px;top:305.95px;font-size:15.5px;line-height:15.5px;color:#6cf06c;font-weight:400;">11.800</div><div class="t" style="left:569px;top:334.95px;font-size:15.5px;line-height:15.5px;color:#6cf06c;font-weight:400;">1</div><div class="t" style="left:769px;top:305.95px;font-size:15.5px;line-height:15.5px;color:#6cf06c;font-weight:400;">95.000</div><div class="t" style="left:769px;top:334.95px;font-size:15.5px;line-height:15.5px;color:#6cf06c;font-weight:400;">0</div><div class="t" style="right:716px;top:307.20px;font-size:14px;line-height:14.0px;color:#c0c0c0;font-weight:400;">VOC ( V )</div><div class="t" style="right:716px;top:336.10px;font-size:14.2px;line-height:14.2px;color:#c0c0c0;font-weight:400;">Inner Res. ( mΩ )</div><div class="t" style="right:516px;top:307.20px;font-size:14px;line-height:14.0px;color:#c0c0c0;font-weight:400;">SOC ( % )</div><div class="t" style="right:516px;top:336.05px;font-size:14.3px;line-height:14.3px;color:#c0c0c0;font-weight:400;">Loop Counter</div><div class="t" style="left:889.5px;top:96.80px;font-size:13px;line-height:13.0px;color:#ffffff;font-weight:700;">Measurement</div><div class="t" style="left:876.5px;top:119.00px;font-size:14px;line-height:14.0px;color:#d0d0d0;font-weight:400;">Voltage ( V )</div><div class="t" style="right:223.70000000000005px;top:140.70px;font-size:34px;line-height:34.0px;color:#c0c0c0;font-weight:400;transform:scale(0.965,1.04);transform-origin:100% 29px;">11.760</div><div class="t" style="left:876.5px;top:175.70px;font-size:14px;line-height:14.0px;color:#d0d0d0;font-weight:400;">Current ( A )</div><div class="t" style="right:223.70000000000005px;top:196.80px;font-size:34px;line-height:34.0px;color:#c0c0c0;font-weight:400;transform:scale(0.965,1.04);transform-origin:100% 29px;">-0.500</div><div class="t" style="left:876.5px;top:237.70px;font-size:14px;line-height:14.0px;color:#d0d0d0;font-weight:400;">Power ( W )</div><div class="t" style="right:223.70000000000005px;top:259.10px;font-size:34px;line-height:34.0px;color:#c0c0c0;font-weight:400;transform:scale(0.965,1.04);transform-origin:100% 29px;">-5.880</div><div class="t" style="left:876.5px;top:300.00px;font-size:14px;line-height:14.0px;color:#d0d0d0;font-weight:400;">Capacity ( Ah )</div><div class="t" style="right:223.70000000000005px;top:321.00px;font-size:34px;line-height:34.0px;color:#c0c0c0;font-weight:400;transform:scale(0.965,1.04);transform-origin:100% 29px;">9.500</div><div class="t" style="left:1067px;top:118.80px;font-size:14px;line-height:14.0px;color:#d0d0d0;font-weight:400;">SOC ( % )</div><div class="t" style="left:1180.3px;top:341.00px;font-size:16px;line-height:16.0px;color:#dcdcdc;font-weight:700;">Record</div><div class="t" style="left:391.2px;top:373.82px;font-size:12.75px;line-height:12.75px;color:#ffffff;font-weight:700;">Measure Curve</div><div class="t" style="left:436px;top:402.10px;font-size:11px;line-height:11.0px;color:#b0b0b0;font-weight:400;">Voltage</div><div class="t" style="left:514px;top:402.10px;font-size:11px;line-height:11.0px;color:#b0b0b0;font-weight:400;">Current</div><div class="t" style="left:859.6px;top:401.10px;font-size:14px;line-height:14.0px;color:#c0c0c0;font-weight:400;">Display Points</div><div class="t" style="right:255.20000000000005px;top:401.20px;font-size:14px;line-height:14.0px;color:#000000;font-weight:400;">100</div><div class="t" style="right:107.29999999999995px;top:401.10px;font-size:14px;line-height:14.0px;color:#c0c0c0;font-weight:400;">Sampling Time ( s )</div><div class="t" style="left:1174.2px;top:402.15px;font-size:13.5px;line-height:13.5px;color:#101010;font-weight:400;">0.1</div><div class="t" style="right:800.2px;top:431.30px;font-size:13px;line-height:13.0px;color:#c0c0c0;font-weight:400;">12</div><div class="t" style="right:800.2px;top:465.30px;font-size:13px;line-height:13.0px;color:#c0c0c0;font-weight:400;">11.2</div><div class="t" style="right:800.2px;top:499.30px;font-size:13px;line-height:13.0px;color:#c0c0c0;font-weight:400;">10.4</div><div class="t" style="right:800.2px;top:533.30px;font-size:13px;line-height:13.0px;color:#c0c0c0;font-weight:400;">9.6</div><div class="t" style="right:800.2px;top:567.30px;font-size:13px;line-height:13.0px;color:#c0c0c0;font-weight:400;">8.8</div><div class="t" style="right:800.2px;top:601.30px;font-size:13px;line-height:13.0px;color:#c0c0c0;font-weight:400;">8</div><div class="t" style="left:1172.7px;top:431.30px;font-size:13px;line-height:13.0px;color:#c0c0c0;font-weight:400;">5</div><div class="t" style="left:1172.7px;top:465.30px;font-size:13px;line-height:13.0px;color:#c0c0c0;font-weight:400;">3</div><div class="t" style="left:1172.7px;top:499.30px;font-size:13px;line-height:13.0px;color:#c0c0c0;font-weight:400;">1</div><div class="t" style="left:1172.7px;top:533.30px;font-size:13px;line-height:13.0px;color:#c0c0c0;font-weight:400;">-1</div><div class="t" style="left:1172.7px;top:567.30px;font-size:13px;line-height:13.0px;color:#c0c0c0;font-weight:400;">-3</div><div class="t" style="left:1172.7px;top:601.30px;font-size:13px;line-height:13.0px;color:#c0c0c0;font-weight:400;">-5</div><div class="t" style="left:415px;top:522px;font-size:12px;line-height:12px;color:#b8b8b8;transform:translate(-50%,-50%) rotate(-90deg);">Voltage ( V )</div><div class="t" style="left:1205.7px;top:522px;font-size:12px;line-height:12px;color:#b8b8b8;transform:translate(-50%,-50%) rotate(90deg);">Current ( A )</div><div class="t" style="left:478.3px;top:622.50px;font-size:12px;line-height:12.0px;color:#b8b8b8;font-weight:400;">Start Time :</div><div class="t" style="left:548.4px;top:622.50px;font-size:12px;line-height:12.0px;color:#b8b8b8;font-weight:400;">2020/03/19 14:41:44</div><div class="t" style="left:725.7px;top:622.50px;font-size:12px;line-height:12.0px;color:#b8b8b8;font-weight:400;">End Time :</div><div class="t" style="left:792.7px;top:622.50px;font-size:12px;line-height:12.0px;color:#b8b8b8;font-weight:400;">-</div><div class="t" style="left:969.9px;top:622.50px;font-size:12px;line-height:12.0px;color:#b8b8b8;font-weight:400;">Execution Time :</div><div class="t" style="left:1067.7px;top:622.50px;font-size:12px;line-height:12.0px;color:#b8b8b8;font-weight:400;">00:00:12</div><div class="t" style="left:391.5px;top:656.40px;font-size:13px;line-height:13.0px;color:#ffffff;font-weight:700;">Test Information</div><div class="t" style="left:381.1px;top:679.70px;font-size:13px;line-height:13.0px;color:#000000;font-weight:700;">2020/03/19 14:41:55 - Curve1 =&gt; Loop4 : Over Cut-Off SOC : 99 %. Real SOC : 99.00 %</div><div class="t" style="left:381.1px;top:695.70px;font-size:13px;line-height:13.0px;color:#000000;font-weight:700;">2020/03/19 14:41:52 - Curve1 =&gt; Loop3 : Over Cut-Off SOC : 99 %. Real SOC : 99.00 %</div><div class="t" style="left:381.1px;top:711.70px;font-size:13px;line-height:13.0px;color:#000000;font-weight:700;">2020/03/19 14:41:50 - Curve1 =&gt; Loop2 : Over Cut-Off SOC : 99 %. Real SOC : 99.00 %</div><div class="t" style="left:1205.7px;transform:translateX(-50%);top:730.75px;font-size:13.3px;line-height:13.3px;color:#b0b0b0;font-weight:400;">Stop</div>
</body></html>
